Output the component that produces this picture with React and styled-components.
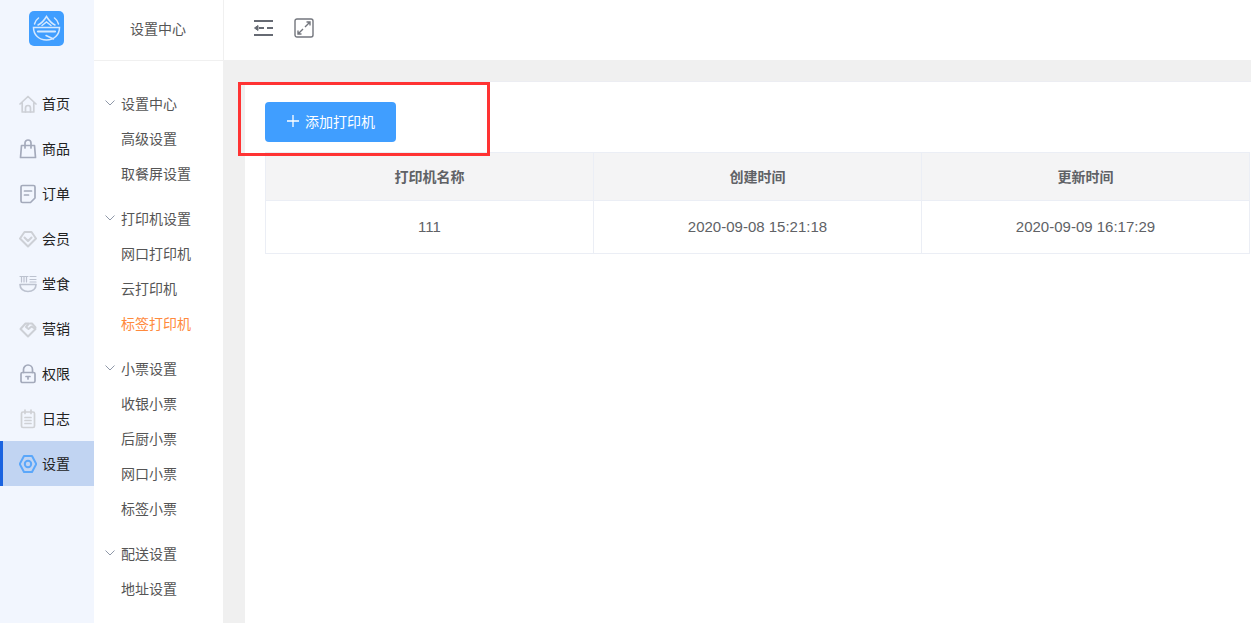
import React from "react";
import styled, { createGlobalStyle } from "styled-components";

const GlobalStyle = createGlobalStyle`
	html, body {
		margin: 0;
		padding: 0;
		height: 100%;
		overflow: hidden;
		background: #f0f0f0;
		font-family: "Liberation Sans", "Noto Sans CJK SC", sans-serif;
	}
	* {
		box-sizing: border-box;
	}
`;

const Page = styled.div`
	display: flex;
	width: 1251px;
	height: 623px;
	position: relative;
	overflow: hidden;
`;

const Rail = styled.aside`
	width: 94px;
	flex: none;
	background: #f2f6fe;
`;

const LogoWrap = styled.div`
	height: 81px;
	padding: 11px 0 0 29px;
`;

const RailItem = styled.div`
	height: 45px;
	display: flex;
	align-items: center;
	padding-left: ${({ $active }) => ($active ? "16px" : "19px")};
	gap: 5px;
	font-size: 14px;
	line-height: 16px;
	color: #222;
	background: ${({ $active }) => ($active ? "#c1d4f2" : "transparent")};
	border-left: ${({ $active }) => ($active ? "3px solid #1a63e0" : "none")};

	svg {
		flex: none;
	}
`;

const SubNav = styled.nav`
	width: 130px;
	flex: none;
	background: #fff;
	border-right: 1px solid #f0f0f0;
`;

const SubTitle = styled.div`
	height: 61px;
	line-height: 58px;
	text-align: center;
	font-size: 14px;
	color: #555;
	border-bottom: 1px solid #f0f0f0;
	padding-right: 1px;
`;

const SubBody = styled.div`
	padding-top: 25px;
`;

const Group = styled.div`
	margin-bottom: 10px;
`;

const GroupTitle = styled.div`
	height: 35px;
	display: flex;
	align-items: center;
	padding: 0 0 2px 11px;
	gap: 6px;
	font-size: 14px;
	color: #555;
`;

const SubItem = styled.div`
	height: 35px;
	line-height: 37px;
	padding-left: 27px;
	font-size: 14px;
	color: ${({ $active }) => ($active ? "#ff8a3c" : "#555")};
`;

const Main = styled.main`
	flex: 1;
	min-width: 0;
	display: flex;
	flex-direction: column;
`;

const Header = styled.header`
	height: 60px;
	flex: none;
	background: #fff;
	display: flex;
	align-items: center;
	gap: 20px;
	padding: 0 0 4px 30px;
`;

const Content = styled.section`
	flex: 1;
	margin: 21px 0 0 21px;
	padding: 20px 0 0 20px;
	background: #fff;
	border-top: 1px solid #ecedf2;
`;

const AddButton = styled.button`
	width: 131px;
	height: 40px;
	border: 0;
	border-radius: 4px;
	background: #409eff;
	color: #fff;
	font: inherit;
	font-size: 14px;
	display: flex;
	align-items: center;
	justify-content: center;
	gap: 5px;
	padding: 0 0 2px;
`;

const Table = styled.div`
	margin-top: 10px;
	width: 985px;
	border-top: 1px solid #ebeef5;
	border-left: 1px solid #ebeef5;
`;

const Row = styled.div`
	display: grid;
	grid-template-columns: repeat(3, 328px);
	height: ${({ $head }) => ($head ? "48px" : "53px")};
	background: ${({ $head }) => ($head ? "#f4f4f5" : "#fff")};
`;

const Cell = styled.div`
	display: flex;
	align-items: center;
	justify-content: center;
	font-size: ${({ $head }) => ($head ? "14px" : "15px")};
	font-weight: ${({ $head }) => ($head ? 700 : 400)};
	padding-bottom: 2px;
	color: #606266;
	border-right: 1px solid #ebeef5;
	border-bottom: 1px solid #ebeef5;
`;

const Annotation = styled.div`
	position: absolute;
	left: 238px;
	top: 82px;
	width: 252px;
	height: 74px;
	border: 3px solid #ff3333;
	pointer-events: none;
`;

const Logo = () => (
	<svg width="35" height="35" viewBox="0 0 35 35">
		<rect width="35" height="35" rx="5" fill="#409eff" />
		<g fill="none" stroke="#d5e9ff" strokeWidth="1.5" strokeLinecap="round">
			<path d="M4.500 16.500h26c0 7.500-5.500 12.500-13 12.500s-13-5-13-12.500z" />
			<path d="M9 20.500h17" strokeWidth="2.200" />
			<path d="M17 24.500l7.500 3.500" />
			<path d="M9 14c3.500-1.500 6-4.500 8.500-8.500c2.500 4 5 7 8.500 8.500" />
			<path d="M13 14.500l4.500-3.500l4.500 3.500" />
			<path d="M5.500 13c.5-2.500 2-4.500 4-6M29.500 13c-.5-2.500-2-4.500-4-6" />
		</g>
	</svg>
);

const railIconProps = {
	width: 18,
	height: 20,
	viewBox: "0 0 18 20",
	fill: "none",
	strokeWidth: 1.7,
	strokeLinejoin: "round",
	strokeLinecap: "round",
};

const HomeIcon = () => (
	<svg {...railIconProps} stroke="#cdd0d6">
		<path d="M1 10L9 2.500 17 10M3.200 8.500V18h11.600V8.500" />
		<path d="M6.500 18v-4a2.500 2.500 0 0 1 5 0v4" />
	</svg>
);
const BagIcon = () => (
	<svg {...railIconProps} stroke="#a4aabb">
		<path d="M2.500 6.500h13l1 12h-15z" />
		<path d="M6 9V4a3 3 0 0 1 6 0v5" />
	</svg>
);
const OrderIcon = () => (
	<svg {...railIconProps} stroke="#a4aabb">
		<path d="M3.500 1.500h11A1.500 1.500 0 0 1 16 3v11l-4.500 4.500h-8A1.500 1.500 0 0 1 2 17V3a1.500 1.500 0 0 1 1.500-1.500z" />
		<path d="M5.500 7h7M5.500 11h4" />
	</svg>
);
const DiamondIcon = () => (
	<svg {...railIconProps} stroke="#cdd0d6" strokeWidth="2">
		<path d="M1 9.500L5.500 3h7l4.500 6.500L9 17.500z" />
		<path d="M5.500 8.500L9 12l3.500-3.500" />
	</svg>
);
const BowlIcon = () => (
	<svg {...railIconProps} stroke="#bcc2cf">
		<path d="M1 10.500h16c0 4.500-3.500 7-8 7s-8-2.500-8-7z" />
		<path d="M11 2.500h6M11 5.500h6M11 8h6M1 2.500h8M2.500 2.500V8M5 2.500V8M7.500 2.500V8" strokeWidth="1.200" />
	</svg>
);
const TagIcon = () => (
	<svg {...railIconProps} stroke="#cdd0d6" strokeWidth="2">
		<path d="M1.500 10L6.500 4.500H10L7 8l2.500 2 3-2.500 4 2.500-7.500 7.500z" />
		<path d="M11.500 4.500h1.500l3.500 4" />
	</svg>
);
const LockIcon = () => (
	<svg {...railIconProps} stroke="#a4aabb">
		<rect x="2" y="8.500" width="14" height="10" rx="1.500" />
		<path d="M4.500 8.500V5.500a4.500 4.500 0 0 1 9 0v3" />
		<path d="M7 12.500h4M9 12.500V15" />
	</svg>
);
const LogIcon = () => (
	<svg {...railIconProps} stroke="#cfd1d5">
		<rect x="2.500" y="3" width="13" height="15.500" rx="1.500" />
		<path d="M6 1v3.500M12 1v3.500M6 8.500h6M6 11.500h6M6 14.500h6" />
	</svg>
);
const GearIcon = () => (
	<svg {...railIconProps} stroke="#5ba7fa" strokeWidth="2">
		<path d="M5 2h8l4.300 8-4.300 8H5L.7 10z" />
		<circle cx="9" cy="10" r="3.200" />
	</svg>
);

const Chevron = () => (
	<svg width="10" height="6" viewBox="0 0 10 6" fill="none" stroke="#8f98a8" strokeWidth="1">
		<path d="M.5.500L5 5 9.500.500" />
	</svg>
);

const CollapseIcon = () => (
	<svg width="20" height="16" viewBox="0 0 20 16" fill="none" stroke="#666a73" strokeWidth="2">
		<path d="M0 1h19M0 15h19M5 8h5M13 8h6" />
		<path d="M0.500 8L4 5.500v5z" fill="#666a73" strokeWidth="1" />
	</svg>
);

const ExpandIcon = () => (
	<svg width="20" height="20" viewBox="0 0 20 20" fill="none" stroke="#73767d" strokeWidth="1.400">
		<rect x="1" y="1" width="18" height="18" rx="2" />
		<path d="M11 9l5-5M12.500 4H16v3.500M9 11l-5 5M4 12.500V16h3.500" />
	</svg>
);

const PlusIcon = () => (
	<svg width="14" height="14" viewBox="0 0 14 14" stroke="#fff" strokeWidth="1.300">
		<path d="M7 1v12M1 7h12" />
	</svg>
);

const railItems = [
	["首页", HomeIcon],
	["商品", BagIcon],
	["订单", OrderIcon],
	["会员", DiamondIcon],
	["堂食", BowlIcon],
	["营销", TagIcon],
	["权限", LockIcon],
	["日志", LogIcon],
	["设置", GearIcon],
];

const groups = [
	{ title: "设置中心", items: ["高级设置", "取餐屏设置"] },
	{ title: "打印机设置", items: ["网口打印机", "云打印机", "标签打印机"] },
	{ title: "小票设置", items: ["收银小票", "后厨小票", "网口小票", "标签小票"] },
	{ title: "配送设置", items: ["地址设置"] },
];

const columns = ["打印机名称", "创建时间", "更新时间"];
const rows = [["111", "2020-09-08 15:21:18", "2020-09-09 16:17:29"]];

const App = () => {
	return (
		<Page>
			<GlobalStyle />
			<Rail>
				<LogoWrap>
					<Logo />
				</LogoWrap>
				{railItems.map(([label, Icon]) => (
					<RailItem key={label} $active={label === "设置"}>
						<Icon />
						{label}
					</RailItem>
				))}
			</Rail>
			<SubNav>
				<SubTitle>设置中心</SubTitle>
				<SubBody>
					{groups.map((group) => (
						<Group key={group.title}>
							<GroupTitle>
								<Chevron />
								{group.title}
							</GroupTitle>
							{group.items.map((item) => (
								<SubItem key={item} $active={item === "标签打印机"}>
									{item}
								</SubItem>
							))}
						</Group>
					))}
				</SubBody>
			</SubNav>
			<Main>
				<Header>
					<CollapseIcon />
					<ExpandIcon />
				</Header>
				<Content>
					<AddButton>
						<PlusIcon />
						添加打印机
					</AddButton>
					<Table>
						<Row $head>
							{columns.map((c) => (
								<Cell key={c} $head>
									{c}
								</Cell>
							))}
						</Row>
						{rows.map((row) => (
							<Row key={row[0]}>
								{row.map((value) => (
									<Cell key={value}>{value}</Cell>
								))}
							</Row>
						))}
					</Table>
				</Content>
			</Main>
			<Annotation />
		</Page>
	);
};

export default App;
